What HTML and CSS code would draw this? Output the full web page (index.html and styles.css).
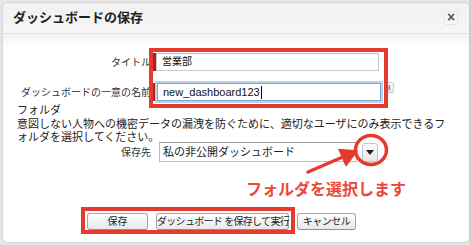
FILE: index.html
```html
<!DOCTYPE html>
<html lang="ja">
<head>
<meta charset="utf-8">
<title>ダッシュボードの保存</title>
<link rel="stylesheet" href="styles.css">
</head>
<body>
<div class="screen">
  <div class="dialog">
    <div class="header">
      <h2 class="title">ダッシュボードの保存</h2>
      <span class="close">×</span>
    </div>
    <div class="body">
      <div class="form">
        <label class="lbl">タイトル</label>
        <div class="field">
          <span class="req"></span>
          <div class="input"><span class="jp-val">営業部</span></div>
        </div>
        <label class="lbl">ダッシュボードの一意の名前</label>
        <div class="field">
          <span class="req tall"></span>
          <div class="input focus">new_dashboard123<span class="caret"></span></div>
          <span class="info">i</span>
        </div>
      </div>
      <div class="folder">
        <div class="folder-title">フォルダ</div>
        <p class="folder-desc">意図しない人物への機密データの漏洩を防ぐために、適切なユーザにのみ表示できるフォルダを選択してください。</p>
      </div>
      <div class="form select-row">
        <label class="lbl">保存先</label>
        <div class="field pick">
          <div class="select">私の非公開ダッシュボード</div>
          <div class="dd"><span class="tri"></span></div>
        </div>
      </div>
      <div class="buttons">
        <button class="btn b1">保存</button>
        <button class="btn b2">ダッシュボード を保存して実行</button>
        <button class="btn b3">キャンセル</button>
      </div>
    </div>
  </div>

  <div class="mark box-inputs"></div>
  <div class="mark box-buttons"></div>
  <svg class="marks" width="472" height="245" viewBox="0 0 472 245">
    <ellipse cx="371" cy="150" rx="15.5" ry="14.5" fill="none" stroke="#e53b2e" stroke-width="3.5"/>
    <line x1="308" y1="172" x2="344" y2="156.5" stroke="#e53b2e" stroke-width="3.5" stroke-linecap="round"/>
    <polygon points="357,151 339,149.5 346,165.5" fill="#e53b2e" stroke="#e53b2e" stroke-width="1.5" stroke-linejoin="round"/>
  </svg>
  <div class="note">フォルダを選択します</div>
</div>
</body>
</html>
```
FILE: styles.css
```css
* { box-sizing: border-box; }

html, body {
  margin: 0;
  padding: 0;
}

body {
  background: #e4e4e4;
  font-family: "Liberation Sans", "Noto Sans CJK JP", sans-serif;
  color: #222;
  width: 472px;
  height: 245px;
  overflow: hidden;
}

.screen {
  position: relative;
  width: 472px;
  height: 245px;
  padding: 3px 3px 0 3px;
  background: linear-gradient(to right, #e6e6e6 0, #e6e6e6 469px, #cfcfcf 470px, #d8d8d8 472px);
}

.dialog {
  width: 466px;
  height: 239px;
  background: #fff;
  border-radius: 5px;
  box-shadow: 0 0 2px rgba(0, 0, 0, 0.25);
  overflow: hidden;
}

.header {
  height: 31px;
  display: flex;
  align-items: center;
  justify-content: space-between;
  padding: 0 11px 0 10px;
  background: linear-gradient(#f1f1f1, #f6f6f6);
  border-bottom: 1px solid #e2e2e2;
}

.title {
  margin: 0;
  font-size: 13px;
  font-weight: bold;
  line-height: 16px;
  color: #222;
}

.close {
  width: 14px;
  height: 14px;
  margin-top: -1px;
  border: 1px solid #e4e4e4;
  border-radius: 2px;
  background: #f8f8f8;
  color: #555;
  font-size: 14px;
  font-weight: bold;
  line-height: 11px;
  text-align: center;
}

.body {
  height: 208px;
  padding: 19px 0 0 14px;
  background: linear-gradient(#f4f4f4 0, #ffffff 14px);
}

.form {
  display: grid;
  grid-template-columns: 134px auto;
  column-gap: 2px;
  row-gap: 12px;
  align-items: center;
}

.lbl {
  font-size: 10px;
  line-height: 13px;
  color: #333;
  text-align: right;
  white-space: nowrap;
}

.field {
  display: flex;
  align-items: stretch;
  height: 18px;
}

.req {
  width: 3px;
  background: #b51c1c;
}

.input {
  width: 223px;
  height: 18px;
  border: 1px solid #cbcbcb;
  border-top-color: #b9b9b9;
  background: #fff;
  padding-left: 5px;
  font-size: 11px;
  line-height: 16px;
  color: #111;
  display: flex;
  align-items: center;
}

.jp-val {
  font-size: 10px;
}

.input.focus {
  width: 224px;
  border-color: #79a3d3;
  box-shadow: 0 0 0 2px #bcd3ee;
  margin-left: 1px;
}

.caret {
  display: inline-block;
  width: 1px;
  height: 13px;
  background: #000;
  margin-left: 1px;
}

.info {
  width: 10px;
  height: 11px;
  margin-left: 3px;
  margin-top: -1px;
  border: 1px solid #cfcfcf;
  border-radius: 2px;
  background: linear-gradient(#fafafa, #e6e6e6);
  color: #2a6fc9;
  font-size: 8px;
  font-weight: bold;
  line-height: 9px;
  text-align: center;
}

.folder {
  margin-top: 3px;
  color: #222;
}

.folder-title {
  font-size: 11px;
  line-height: 13px;
}

.folder-desc {
  margin: 1px 0 0 0;
  width: 435px;
  font-size: 11px;
  line-height: 13px;
  line-break: loose;
}

.select-row {
  margin-top: -2px;
}

.field.pick {
  height: 20px;
  margin-left: 6px;
  align-items: center;
}

.select {
  width: 198px;
  height: 20px;
  border: 1px solid #bdbdbd;
  border-top-color: #9d9d9d;
  background: #fff;
  padding-left: 3px;
  font-size: 11px;
  line-height: 18px;
  color: #222;
}

.dd {
  width: 16px;
  height: 19px;
  margin-left: 5px;
  border: 1px solid #c4c4c4;
  border-radius: 3px;
  background: linear-gradient(#fdfdfd, #e7e7e7);
  display: flex;
  align-items: center;
  justify-content: center;
}

.tri {
  width: 0;
  height: 0;
  border-left: 4px solid transparent;
  border-right: 4px solid transparent;
  border-top: 5px solid #222;
}

.buttons {
  display: flex;
  gap: 8px;
  margin-top: 51px;
  padding-left: 70px;
}

.btn {
  height: 17px;
  padding: 0;
  border: 1px solid #a9a9a9;
  border-bottom-color: #8f8f8f;
  border-radius: 3px;
  background: linear-gradient(#ffffff, #e8e8e8);
  font-family: "Liberation Sans", "Noto Sans CJK JP", sans-serif;
  font-size: 10px;
  line-height: 14px;
  color: #222;
  white-space: nowrap;
}

.b1 { width: 61px; }
.b2 { width: 133px; letter-spacing: -0.7px; }
.b3 { width: 59px; letter-spacing: -0.5px; }

.mark {
  position: absolute;
  border: 4px solid #e53b2e;
}

.box-inputs {
  left: 149px;
  top: 48px;
  width: 239px;
  height: 60px;
}

.box-buttons {
  left: 81px;
  top: 207px;
  width: 214px;
  height: 27px;
}

.marks {
  position: absolute;
  left: 0;
  top: 0;
}

.note {
  position: absolute;
  left: 246px;
  top: 177px;
  font-family: "Noto Sans CJK JP", sans-serif;
  font-size: 16px;
  font-weight: bold;
  line-height: 22px;
  color: #e9493b;
  white-space: nowrap;
}
```
